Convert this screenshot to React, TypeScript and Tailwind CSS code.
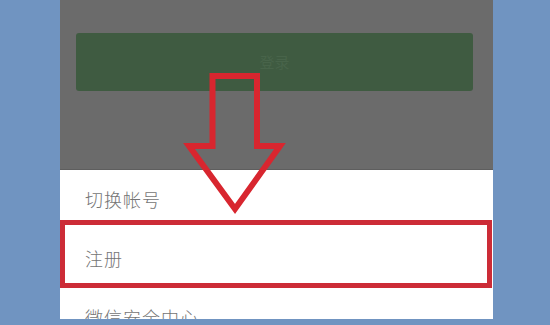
const items = ["切换帐号", "注册", "微信安全中心"];

export default function App() {
  return (
    <div className="h-[325px] w-[550px] overflow-hidden bg-[#7094c1] pl-[60px]">
      <div className="relative flex h-[319px] w-[433px] flex-col overflow-hidden">
        {/* dimmed login page */}
        <div className="h-[170px] shrink-0 border-b border-[#5e5e5e] bg-[#6b6b6b] pt-[33px]">
          <div className="ml-4 mr-5 flex h-[58px] items-center justify-center rounded-[3px] bg-[#3f5b41] text-[15px] text-[#48644a] [font-family:'Noto_Sans_CJK_SC',sans-serif]">
            登录
          </div>
        </div>

        {/* action sheet */}
        <div className="flex flex-1 flex-col bg-white [font-family:'Noto_Sans_CJK_SC',sans-serif]">
          {items.map((t) => (
            <div
              key={t}
              className="flex h-[59px] shrink-0 items-center pl-[25px] text-[18px] font-light tracking-[1px] text-[#747474]"
            >
              {t}
            </div>
          ))}
        </div>

        {/* red highlight box */}
        <div className="absolute left-0 top-[220px] h-[68px] w-[432px] border-[5px] border-[#cc2c37]" />

        {/* red arrow */}
        <svg
          className="absolute left-0 top-0"
          width="433"
          height="319"
          viewBox="60 0 433 319"
        >
          <polygon
            points="212.5,76 257,76 257,146 280,146 235,209 189,146 212.5,146"
            fill="none"
            stroke="#d8262f"
            strokeWidth="6"
            strokeLinejoin="miter"
          />
        </svg>
      </div>
    </div>
  );
}
